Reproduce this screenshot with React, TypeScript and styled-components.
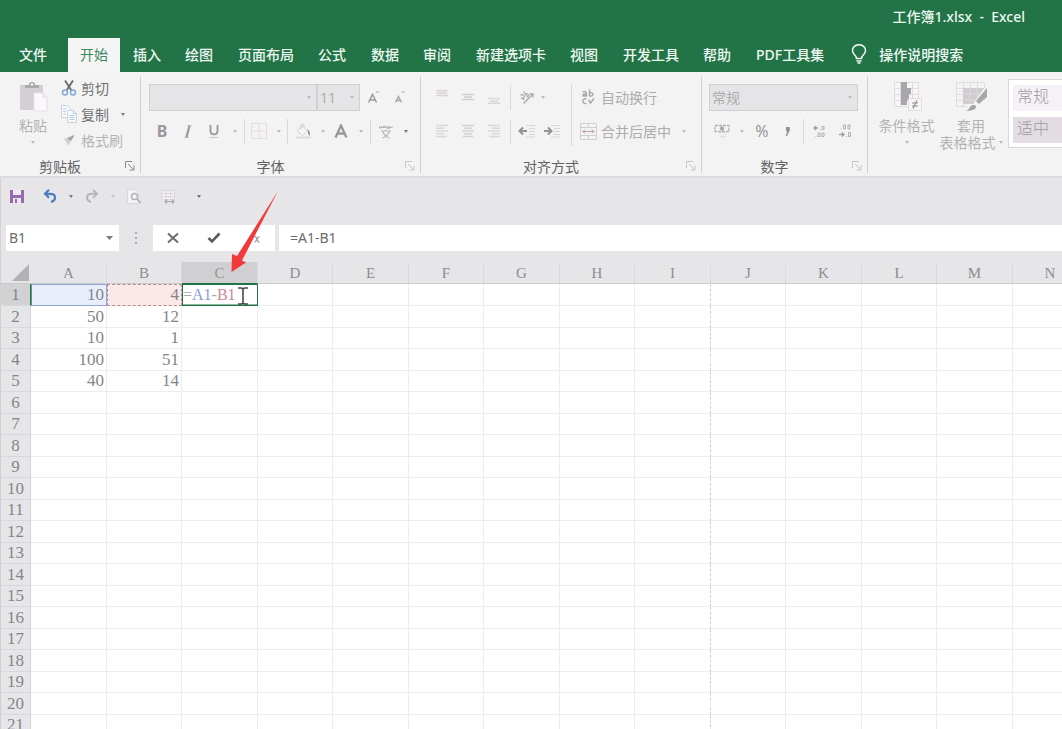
import React from 'react';
import styled, { createGlobalStyle, css } from 'styled-components';

const ui = `"Noto Sans", "Noto Sans CJK SC", sans-serif`;
const cellFont = `"Liberation Serif", "Noto Sans CJK SC", serif`;

const GlobalStyle = createGlobalStyle`
  * { box-sizing: border-box; }
  body { margin: 0; background: #e6e6e8; font-family: ${ui}; font-size: 14px; overflow: hidden; }
  button, select, input { font: inherit; color: inherit; border: 0; background: none; padding: 0; margin: 0; outline: 0; }
  svg { display: block; flex: none; }
`;

const Window = styled.div`
  display: flex;
  flex-direction: column;
  height: 100vh;
  overflow: hidden;
`;

const Header = styled.header`
  background: #227447;
  color: #eef7f1;
  font-weight: 500;
`;

const TitleBar = styled.div`
  display: flex;
  justify-content: flex-end;
  align-items: center;
  height: 38px;
  padding: 0 37px 6px 0;
  white-space: pre;
`;

const Tabs = styled.nav`
  display: flex;
  align-items: stretch;
  height: 34px;
  padding-left: 7px;
`;

const Tab = styled.button<{ $active?: boolean; $file?: boolean }>`
  padding: 0 12px 2px;
  white-space: nowrap;
  margin-right: ${(p) => (p.$file ? 9 : 0)}px;
  &:nth-child(even) { margin-right: 1px; }
  ${(p) =>
    p.$active &&
    css`
      background: #f5f5f5;
      color: #3c8a60;
      font-weight: 400;
    `}
`;

const TellMe = styled.button`
  display: flex;
  align-items: center;
  gap: 12px;
  padding: 0 0 2px 15px;
  white-space: nowrap;
`;

const Ribbon = styled.section`
  display: flex;
  height: 106px;
  flex: none;
  background: #f3f3f3;
  border-bottom: 2px solid #dcdcde;
  color: #acacae;
  overflow: hidden;
`;

const GroupBox = styled.div<{ $w: number }>`
  display: flex;
  flex-direction: column;
  flex: none;
  width: ${(p) => p.$w}px;
  margin-top: 4px;
  margin-bottom: 3px;
  border-right: 1px solid #d2d2d4;
`;

const GroupBody = styled.div`
  display: flex;
  flex: 1;
`;

const GroupFoot = styled.div<{ $on?: boolean }>`
  display: flex;
  align-items: center;
  height: 18px;
  padding-top: 4px;
  color: #626264;
  text-align: center;
  span { flex: 1; }
  button {
    display: flex;
    justify-content: center;
    width: 20px;
    color: ${(p) => (p.$on ? '#8c8c8e' : '#c6c6c8')};
  }
`;

const Column = styled.div<{ $pad?: number; $w?: number }>`
  display: flex;
  flex-direction: column;
  padding: 4px 0 0 ${(p) => p.$pad ?? 0}px;
  width: ${(p) => (p.$w ? p.$w + 'px' : 'auto')};
`;

const Row = styled.div`
  display: flex;
  align-items: center;
  height: 34px;
`;

const Tool = styled.button<{ $w?: number; $size?: number; $bold?: boolean }>`
  display: flex;
  align-items: center;
  justify-content: center;
  flex: none;
  width: ${(p) => p.$w ?? 26}px;
  height: 26px;
  font-size: ${(p) => p.$size ?? 16}px;
  font-weight: ${(p) => (p.$bold ? 700 : 400)};
  color: #98989a;
`;

const Sep = styled.i<{ $w: number; $tall?: boolean }>`
  flex: none;
  width: ${(p) => p.$w}px;
  height: ${(p) => (p.$tall ? 62 : 25)}px;
  margin-top: ${(p) => (p.$tall ? 8 : 0)}px;
  background: linear-gradient(#d9d9db, #d9d9db) center / 1px 100% no-repeat;
`;

const TextTool = styled.button`
  display: flex;
  align-items: center;
  gap: 4px;
  height: 26px;
  white-space: nowrap;
`;

const IconSlot = styled.span`
  display: flex;
  justify-content: center;
  width: 18px;
`;

const Combo = styled.div<{ $w: number }>`
  display: flex;
  align-items: center;
  width: ${(p) => p.$w}px;
  height: 27px;
  padding: 0 5px 0 2px;
  background: #e5e5e7;
  border: 1px solid #d0d0d2;
  select {
    flex: 1;
    min-width: 0;
    appearance: none;
  }
`;

const ClipList = styled.div`
  display: flex;
  flex-direction: column;
  padding-left: 1px;
`;

const ClipItem = styled.button<{ $on?: boolean }>`
  display: flex;
  align-items: center;
  gap: 4px;
  height: 26px;
  padding-bottom: 2px;
  white-space: nowrap;
  color: ${(p) => (p.$on ? '#727274' : '#b4b4b6')};
  svg:last-child:not(:first-child) { margin-left: 8px; }
`;

const BigTool = styled.button<{ $w: number; $pad?: number }>`
  display: flex;
  flex-direction: column;
  align-items: center;
  width: ${(p) => p.$w}px;
  padding: 5px 0 0 ${(p) => p.$pad ?? 0}px;
  line-height: 17px;
  white-space: nowrap;
  color: #b2b2b4;
  svg { margin-bottom: 4px; }
  span { display: flex; align-items: center; min-height: 17px; gap: 3px; }
  span svg { margin: 0; }
`;

const Styles = styled.div`
  display: flex;
  flex: 1;
  min-width: 0;
  padding: 4px 0 0 6px;
`;

const Gallery = styled.div`
  display: flex;
  flex-direction: column;
  gap: 6px;
  flex: 1;
  min-width: 54px;
  height: 69px;
  margin: 3px 0 0 5px;
  padding: 5px 0 0 4px;
  background: #fff;
  border: 1px solid #d8d8da;
  border-right: 0;
`;

const StyleItem = styled.button<{ $bg: string }>`
  height: 26px;
  padding: 0 0 4px 4px;
  text-align: left;
  font-size: 16px;
  line-height: 22px;
  font-weight: 300;
  color: #9c9a9c;
  background: ${(p) => p.$bg};
`;

const QuickBar = styled.div`
  display: flex;
  align-items: center;
  height: 36px;
  flex: none;
  padding-left: 4px;
  border-left: 1px solid #d4d4d6;
`;

const FormulaBar = styled.div`
  display: flex;
  align-items: stretch;
  height: 48px;
  flex: none;
  padding: 11px 0 11px 5px;
  border-left: 1px solid #d4d4d6;
  color: #6c6c6e;
`;

const NameBox = styled.label`
  display: flex;
  align-items: center;
  width: 113px;
  padding: 0 6px 0 3px;
  background: #fff;
  input { flex: 1; min-width: 0; padding-bottom: 2px; }
`;

const Grip = styled.span`
  display: flex;
  align-items: center;
  justify-content: center;
  width: 34px;
`;

const FormulaButtons = styled.div`
  display: flex;
  align-items: center;
  width: 122px;
  background: #fff;
`;

const FormulaInput = styled.input`
  && {
    flex: 1;
    min-width: 0;
    margin-left: 4px;
    padding: 0 0 2px 11px;
    background: #fff;
  }
`;

const Sheet = styled.main`
  position: relative;
  flex: 1;
  min-height: 0;
  overflow: hidden;
`;

const Grid = styled.table`
  table-layout: fixed;
  border-collapse: separate;
  border-spacing: 0;
  width: 1088px;
  font-family: ${cellFont};
  color: #858587;
  font-size: 17px;
  line-height: 20px;
  th, td { padding: 0; overflow: hidden; white-space: nowrap; }
`;

const GutterCol = styled.col`
  width: 31px;
`;

const SheetCol = styled.col`
  width: 75px;
  &:nth-child(even) { width: 76px; }
`;

const HeadCell = styled.th<{ $sel?: boolean }>`
  height: 22px;
  font-size: 15px;
  font-weight: 400;
  color: ${(p) => (p.$sel ? '#8e9a92' : '#8c8c8e')};
  background: ${(p) => (p.$sel ? '#d0d0d2' : '#e6e6e8')};
  border-right: 1px solid #dadadc;
  border-bottom: 1px solid ${(p) => (p.$sel ? '#217346' : '#cacacc')};
`;

const Corner = styled.td`
  background: #e6e6e8;
  border-left: 1px solid #d4d4d6;
  border-bottom: 1px solid #cacacc;
  svg { margin-left: 11px; }
`;

const BodyRow = styled.tr`
  height: 21px;
  &:nth-child(even) { height: 22px; }
`;

const RowHead = styled.th<{ $sel?: boolean }>`
  font-weight: 400;
  text-align: center;
  color: #858587;
  background: ${(p) => (p.$sel ? '#d2d2d4' : '#e6e6e8')};
  border-left: 1px solid #cfcfd1;
  border-right: 1px solid ${(p) => (p.$sel ? '#217346' : '#d4d4d6')};
  border-bottom: 1px solid #d8d8da;
`;

const Cell = styled.td<{ $kind?: string; $break?: boolean }>`
  text-align: right;
  background: #fff;
  border-right: 1px ${(p) => (p.$break ? 'dashed #cfcfd1' : 'solid #ededef')};
  border-bottom: 1px solid #ededef;
  &&& { padding-right: 2px; }
  ${(p) =>
    p.$kind === 'refA' &&
    css`
      background: #e8eefb;
      border: 1px solid #8fa6d8;
      border-left-color: #5d9a86;
    `}
  ${(p) =>
    p.$kind === 'refB' &&
    css`
      background: #fbe9e8;
      border: 1px dashed #b58a8a;
    `}
  ${(p) =>
    p.$kind === 'edit' &&
    css`
      text-align: left;
      font-size: 16px;
      border: 1px solid #217346;
      box-shadow: inset 0 -1px #8dbba2;
    `}
`;

const Ref = styled.span<{ $c: string }>`
  color: ${(p) => p.$c};
`;

const Beam = styled.svg`
  position: absolute;
  left: 237px;
  top: 25px;
`;

const Pointer = styled.svg`
  position: absolute;
  left: 230px;
  top: 190px;
  z-index: 2;
`;

const Caret = ({ c = '#bcbcbe', s = 4 }: { c?: string; s?: number }) => (
  <svg width={s} height={s > 4 ? 4 : 3} viewBox="0 0 6 4" preserveAspectRatio="none" aria-hidden="true">
    <path d="M0 0h6L3 4z" fill={c} />
  </svg>
);

const DropTool = ({ w, c, label }: { w: number; c?: string; label: string }) => (
  <Tool $w={w} aria-label={label}>
    <Caret c={c} />
  </Tool>
);

const Launcher = () => (
  <svg width="10" height="10" viewBox="0 0 10 10" fill="none" stroke="currentColor">
    <path d="M.5 7V.5H7M3 3l5.500 5.500M9 4.500V9H4.500" />
  </svg>
);

const Lines = ({ d, c = '#d0d0d2' }: { d: string; c?: string }) => (
  <svg width="14" height="14" viewBox="0 0 14 14" fill="none" stroke={c} strokeWidth="1.400">
    <path d={d} />
  </svg>
);

const Indent = ({ right }: { right?: boolean }) => (
  <svg width="17" height="14" viewBox="0 0 17 14" fill="none">
    <path d="M8 1.500h9M11 4.500h6M11 7.500h6M11 10.500h6M8 13h9" stroke="#d6d6d8" />
    <path d={right ? 'M1 7h7M5 3.500L8.500 7 5 10.500' : 'M9 7H2M5 3.500L1.500 7 5 10.500'} stroke="#929294" strokeWidth="2" />
  </svg>
);

interface GroupProps {
  label: string;
  w: number;
  on?: boolean;
  children: React.ReactNode;
}

const Group = ({ label, w, on, children }: GroupProps) => (
  <GroupBox $w={w}>
    <GroupBody>{children}</GroupBody>
    <GroupFoot $on={on}>
      <span>{label}</span>
      <button aria-label={label + '设置'}>
        <Launcher />
      </button>
    </GroupFoot>
  </GroupBox>
);

const tabs = ['插入', '绘图', '页面布局', '公式', '数据', '审阅', '新建选项卡', '视图', '开发工具', '帮助', 'PDF工具集'];
const columns = 'ABCDEFGHIJKLMN'.split('');
const rows = Array.from({ length: 21 }, (_, i) => i + 1);
const data: Record<string, string> = {
  A1: '10', B1: '4', A2: '50', B2: '12', A3: '10', B3: '1', A4: '100', B4: '51', A5: '40', B5: '14',
};
const kinds: Record<string, string> = { A1: 'refA', B1: 'refB', C1: 'edit' };

const Clipboard = () => (
  <Group label="剪贴板" w={141} on>
    <BigTool $w={60} $pad={6}>
      <svg width="30" height="32" viewBox="0 0 30 32">
        <path d="M2 4h23v25H2z" fill="#d3cfd4" />
        <path d="M7 7V4h4a3 3 0 0 1 6 0h4v3z" fill="#a9a8ab" />
        <circle cx="14" cy="3.500" r="1.300" fill="#f3f3f3" />
        <path d="M16 12h9l4 4v14H16z" fill="#fbf8fb" stroke="#e6dde5" />
        <path d="M25 12v4h4" fill="none" stroke="#e0d6df" />
      </svg>
      <span>粘贴</span>
      <span>
        <Caret />
      </span>
    </BigTool>
    <ClipList>
      <ClipItem $on>
        <svg width="16" height="16" viewBox="0 0 16 16" fill="none">
          <path d="M4 0.500l6.500 10M12 0.500l-6.500 10" stroke="#6c6c6e" strokeWidth="1.900" />
          <circle cx="4" cy="12.500" r="2.500" stroke="#86a8d6" strokeWidth="1.500" />
          <circle cx="12" cy="12.500" r="2.500" stroke="#86a8d6" strokeWidth="1.500" />
        </svg>
        剪切
      </ClipItem>
      <ClipItem $on>
        <svg width="16" height="18" viewBox="0 0 16 18" fill="#f8fafc" stroke="#ccd3df">
          <path d="M.5 .5h6l3 3v9h-9z" />
          <path d="M2 4h4M2 6.500h3M2 9h3" stroke="#b9d0ec" />
          <path d="M6.500 5.500h6l3 3v9h-9z" />
          <path d="M12.500 5.500v3h3M8.500 10.500h5M8.500 12.500h5M8.500 14.500h5" stroke="#b0caea" />
        </svg>
        复制
        <Caret c="#7a7a7c" />
      </ClipItem>
      <ClipItem>
        <svg width="16" height="16" viewBox="0 0 16 16">
          <path d="M3 7l4-1 3 3-3 5-1-3z" fill="#cfcfd1" />
          <path d="M6 6l5-2 2.500-1.500L12.500 5 10 9z" fill="#a4a4a6" />
        </svg>
        格式刷
      </ClipItem>
    </ClipList>
  </Group>
);

const FontGroup = () => (
  <Group label="字体" w={280}>
    <Column $pad={8}>
      <Row>
        <Combo $w={168}>
          <select aria-label="字体">
            <option></option>
          </select>
          <Caret />
        </Combo>
        <Combo $w={43}>
          <select aria-label="字号" defaultValue="11">
            <option>11</option>
          </select>
          <Caret />
        </Combo>
        <Tool $w={28} aria-label="增大字号">
          <svg width="14" height="16" viewBox="0 0 14 16" fill="none" stroke="#9b9b9d">
            <path d="M1.500 13.500L5.500 5.500 9.500 13.500M3 11h5" strokeWidth="1.500" />
            <path d="M9 4l1.500-2 1.500 2" stroke="#b4b4b6" />
          </svg>
        </Tool>
        <Tool $w={24} aria-label="减小字号">
          <svg width="14" height="16" viewBox="0 0 14 16" fill="none" stroke="#a4a4a6">
            <path d="M2.500 13.500L5.500 7.500 8.500 13.500M3.500 11.500h4" strokeWidth="1.400" />
            <path d="M8.500 2l1.500 2 1.500-2" stroke="#b4b4b6" />
          </svg>
        </Tool>
      </Row>
      <Row>
        <Tool $bold>B</Tool>
        <Tool aria-label="倾斜">
          <svg width="10" height="13" viewBox="0 0 10 13" fill="none" stroke="#98989a">
            <path d="M6.500 1L3.500 12" strokeWidth="2.200" />
            <path d="M4.500 .7h4M1.500 12.300h4" strokeWidth=".8" />
          </svg>
        </Tool>
        <Tool aria-label="下划线">
          <svg width="12" height="15" viewBox="0 0 12 15" fill="none" stroke="#98989a">
            <path d="M2.500 1v6c0 4.500 7 4.500 7 0V1" strokeWidth="1.800" />
            <path d="M1.500 13.500h9" stroke="#cacacc" />
          </svg>
        </Tool>
        <DropTool w={16} label="下划线样式" />
        <Sep $w={3} />
        <Tool aria-label="边框">
          <svg width="16" height="16" viewBox="0 0 16 16" fill="none" stroke="#e6dbe4">
            <path d="M.5 .5h15v15H.5zM8 1v14M1 8h14" />
          </svg>
        </Tool>
        <DropTool w={14} label="边框样式" />
        <Sep $w={3} />
        <Tool $w={28} aria-label="填充颜色">
          <svg width="17" height="17" viewBox="0 0 17 17" fill="none">
            <path d="M2 7.500L7.500 3l5 5-5 4.500z" stroke="#d8cfd7" fill="#f8f4f8" />
            <path d="M6 6V2.500a1.500 1.500 0 0 1 3 0V5" stroke="#ccc5cb" />
            <path d="M12 6.500c2 .5 3.500 2 3 6-1.500 0-2.500-2-2-3.500z" fill="#98989a" />
            <path d="M1 14.500h15" stroke="#e0d8df" strokeWidth="2" />
          </svg>
        </Tool>
        <DropTool w={12} label="填充选项" />
        <Tool $w={24} aria-label="字体颜色">
          <svg width="14" height="14" viewBox="0 0 14 14" fill="none" stroke="#98989a" strokeWidth="2.300">
            <path d="M1.500 13.500L7 1.500 12.500 13.500M3.500 9.500h7" />
          </svg>
        </Tool>
        <DropTool w={16} label="字体颜色选项" />
        <Sep $w={3} />
        <Tool $w={28} aria-label="拼音">
          <svg width="14" height="15" viewBox="0 0 14 15" fill="none" stroke="#b8b8ba">
            <path d="M.5 2v2h2V2M4.500 4V2h2v2M8.500 2.500h2v2h-2zM13 2v2M1 3.500h12" />
            <path d="M2 7h10M7 5.500V7M3.500 7.500c1.500 3.500 4 5.500 7 6.500M10.500 7.500c-1.500 3.500-4 5.500-7 6.500" strokeWidth="1.200" />
          </svg>
        </Tool>
        <DropTool w={12} c="#7a7a7c" label="拼音选项" />
      </Row>
    </Column>
  </Group>
);

const AlignGroup = () => (
  <Group label="对齐方式" w={281}>
    <Column $pad={8} $w={147}>
      <Row>
        <Tool aria-label="顶端对齐"><Lines d="M1 .5h12M2 3h10M1 5.500h12" c="#dccfd5" /></Tool>
        <Tool aria-label="垂直居中"><Lines d="M1 4.500h12M3 7h8M1 9.500h12" /></Tool>
        <Tool aria-label="底端对齐"><Lines d="M1 8.500h12M3 11h8M1 13.300h12" c="#d8d8da" /></Tool>
        <Sep $w={7} />
        <Tool aria-label="方向">
          <svg width="16" height="15" viewBox="0 0 16 15" fill="none" stroke="#aaaaac">
            <path d="M4.500 13.500L13.500 4.500M10.500 4H14V7.500" strokeWidth="1.400" />
            <path d="M2 7.500L5.500 10M1.500 5.500c1-1.500 3-1 4 .5L4 9.500M4.500 1.500L9 7.500M6.500 4c2-1 4 1 2.500 3" strokeWidth="1.200" />
          </svg>
        </Tool>
        <DropTool w={6} label="方向选项" />
      </Row>
      <Row>
        <Tool aria-label="左对齐"><Lines d="M1 1.500h12M1 4.300h8M1 7h12M1 9.800h8M1 12.500h11" c="#d8d8da" /></Tool>
        <Tool aria-label="居中"><Lines d="M1 1.500h12M3 4.300h8M1 7h12M3 9.800h8M2 12.500h10" c="#d2d2d4" /></Tool>
        <Tool aria-label="右对齐"><Lines d="M1 1.500h12M5 4.300h8M1 7h12M5 9.800h8M2 12.500h11" c="#d8d8da" /></Tool>
        <Sep $w={7} />
        <Tool $w={24} aria-label="减少缩进"><Indent /></Tool>
        <Tool aria-label="增加缩进"><Indent right /></Tool>
      </Row>
    </Column>
    <Sep $w={7} $tall />
    <Column $pad={4}>
      <Row>
        <TextTool>
          <IconSlot>
            <svg width="14" height="16" viewBox="0 0 14 16" fill="none" stroke="#a6a6a8" strokeWidth="1.400">
              <path d="M1.500 3c3-1 4 0 4 1.500V7.500M5.500 4.800c-5 0-4.500 3.500 0 1.700M8.500 .5v7M8.500 4c4-2 5 4 0 3M5.500 10c-5-1.500-5 5.500 0 4.500M7.500 11l2 3 3.500-4.500" />
            </svg>
          </IconSlot>
          自动换行
        </TextTool>
      </Row>
      <Row>
        <TextTool>
          <IconSlot>
            <svg width="17" height="17" viewBox="0 0 17 17" fill="none" stroke="#d2ced2">
              <path d="M.5 .5h16v16H.5zM.5 4.500h16M.5 12.500h16M8.500 .5v4M8.500 12.500v4" />
              <path d="M2.500 8.500h12M5 6.500l-2 2 2 2M12 6.500l2 2-2 2" stroke="#bb9dae" />
            </svg>
          </IconSlot>
          合并后居中
        </TextTool>
        <DropTool w={26} label="合并选项" />
      </Row>
    </Column>
  </Group>
);

const NumberGroup = () => (
  <Group label="数字" w={166}>
    <Column $pad={7}>
      <Row>
        <Combo $w={149}>
          <select aria-label="数字格式" defaultValue="常规">
            <option>常规</option>
          </select>
          <Caret />
        </Combo>
      </Row>
      <Row>
        <Tool aria-label="会计数字格式">
          <svg width="16" height="14" viewBox="0 0 16 14" fill="none" stroke="#b2aeb2">
            <path d="M1 1.500h14v6H1z" strokeDasharray="3 1" strokeWidth="1.300" />
            <circle cx="8" cy="4.500" r="1.800" fill="#a4a4a6" />
            <path d="M5 9.500c2-1.500 5-1.500 7 0M5.500 12c2 1.500 4 1.500 6 0" stroke="#dccfd5" />
          </svg>
        </Tool>
        <DropTool w={14} label="货币" />
        <Tool>%</Tool>
        <Tool aria-label="千位分隔">
          <svg width="6" height="9" viewBox="0 0 6 9">
            <path d="M1 0h3.500L5 3 2 9H.8L2.200 4H1z" fill="#919193" />
          </svg>
        </Tool>
        <Sep $w={5} />
        <Tool aria-label="增加小数位">
          <svg width="12" height="13" viewBox="0 0 12 13" fill="none" stroke="#b0b0b2">
            <path d="M1 3h4M3 1L1 3l2 2" strokeWidth="1.400" stroke="#a0a0a2" />
            <path d="M7 5h1M9 1.500h2v3H9zM2.500 11.500h1M5 8h2v3.500H5zM9 8h2v3.500H9z" />
          </svg>
        </Tool>
        <Tool aria-label="减少小数位">
          <svg width="14" height="14" viewBox="0 0 14 14" fill="none" stroke="#b0b0b2">
            <path d="M2.500 5h1M5.500 1h2v4h-2zM10 1h2v4h-2z" />
            <path d="M1 10.500h5M4 8.500l2 2-2 2" strokeWidth="1.400" stroke="#a0a0a2" />
            <path d="M8 12.500h1M10.500 8.500h2v4h-2z" />
          </svg>
        </Tool>
      </Row>
    </Column>
  </Group>
);

const StylesGroup = () => (
  <Styles>
    <BigTool $w={65}>
      <svg width="30" height="32" viewBox="0 0 30 32" fill="none">
        <path d="M2.500 1.500h24v24h-24zM2.500 7.500h24M2.500 13.500h24M2.500 19.500h24M8.500 1.500v24M20.500 1.500v24" stroke="#e2dbe1" fill="#f8f5f8" />
        <path d="M9 1h6v6h4v6h-2v6h-2v5H9z" fill="#a8a7aa" />
        <path d="M16.500 17.500h13v12h-13z" fill="#f8f5f8" stroke="#e2dbe1" />
        <path d="M20 22h6M20 25h6M25 19.500l-4 8" stroke="#8f8f91" strokeWidth="1.200" />
      </svg>
      <span>条件格式</span>
      <span>
        <Caret />
      </span>
    </BigTool>
    <BigTool $w={64}>
      <svg width="32" height="32" viewBox="0 0 32 32" fill="none">
        <path d="M1.500 1.500h28v6h-28zM1.500 13.500h10M1.500 19.500h10M1.500 25.500h10M1.500 7v18.500M8.500 1.500v24M15.500 1.500v6M22.500 1.500v6" stroke="#e2dbe1" />
        <path d="M8 7h21L18 23H8z" fill="#cfccd0" />
        <path d="M8 13h17M8 19h12M15 7v16M22 7v10" stroke="#dcd8dc" />
        <path d="M32 7v9l-8 7-3-3z" fill="#a8a7aa" />
        <path d="M10 30c5 0 4-7 9-6 4 1 3 6-9 6z" fill="#a3a2a5" />
      </svg>
      <span>套用</span>
      <span>
        表格格式
        <Caret />
      </span>
    </BigTool>
    <Gallery>
      <StyleItem $bg="#f6f1f6">常规</StyleItem>
      <StyleItem $bg="#e3dce2">适中</StyleItem>
    </Gallery>
  </Styles>
);

const QuickAccess = () => (
  <QuickBar>
    <Tool $w={24} aria-label="保存">
      <svg width="14" height="13" viewBox="0 0 14 13">
        <path d="M0 0h14v13H0z" fill="#9669b1" />
        <path d="M3 0h8v5H3z" fill="#f1eaf4" />
        <path d="M3 8h8v5H3z" fill="#ebe6ee" />
        <path d="M5 9h2v4H5z" fill="#9669b1" />
      </svg>
    </Tool>
    <Tool $w={42} aria-label="撤消">
      <svg width="14" height="14" viewBox="0 0 14 14" fill="none" stroke="#4c7dbd" strokeWidth="2.200">
        <path d="M6 .8L2 4.800 6 8.800M2 4.800h5c6.500 0 6.500 6.500 1 8.200" />
      </svg>
    </Tool>
    <DropTool w={0} c="#7a7a7c" label="撤消历史" />
    <Tool $w={42} aria-label="重做">
      <svg width="14" height="14" viewBox="0 0 14 14" fill="none" stroke="#b6b6b8" strokeWidth="1.900">
        <path d="M8 .8l4 4-4 4M12 4.800H7c-6.500 0-6.500 6.500-1 8.200" />
      </svg>
    </Tool>
    <DropTool w={0} c="#c4c4c6" label="重做历史" />
    <Tool $w={42} aria-label="打印预览">
      <svg width="14" height="15" viewBox="0 0 14 15" fill="none">
        <path d="M.5 .5h7l4 4v10H.5z" fill="#f5f3f6" stroke="#dad8dc" />
        <circle cx="7.500" cy="7.500" r="3" stroke="#b0b0b2" strokeWidth="1.400" />
        <path d="M10 10l3.500 4" stroke="#b0b0b2" strokeWidth="1.800" />
      </svg>
    </Tool>
    <Tool aria-label="列宽">
      <svg width="16" height="15" viewBox="0 0 16 15" fill="none">
        <path d="M1.500 1.500h13v9h-13zM1.500 4.500h13M1.500 7.500h13M6 1.500v9M10.500 1.500v9" fill="#f4f0f4" stroke="#dcd7dc" />
        <path d="M5 12.500h9M7 10.500l-2 2 2 2M12 10.500l2 2-2 2" stroke="#a8a8aa" strokeWidth="1.200" />
      </svg>
    </Tool>
    <DropTool w={36} c="#707072" label="自定义快速访问工具栏" />
  </QuickBar>
);

export default function App() {
  return (
    <Window>
      <GlobalStyle />
      <Header>
        <TitleBar>{'工作簿1.xlsx  -  Excel'}</TitleBar>
        <Tabs>
          <Tab $file>文件</Tab>
          <Tab $active>开始</Tab>
          {tabs.map((t) => (
            <Tab key={t}>{t}</Tab>
          ))}
          <TellMe>
            <svg width="16" height="20" viewBox="0 0 16 20" fill="none" stroke="#eef7f1" strokeWidth="1.500">
              <path d="M5.500 14.500c0-3-4-4-4-8a6.500 5.800 0 0 1 13 0c0 4-4 5-4 8zM5.500 17h5M6.500 19h3" />
            </svg>
            操作说明搜索
          </TellMe>
        </Tabs>
      </Header>
      <Ribbon>
        <Clipboard />
        <FontGroup />
        <AlignGroup />
        <NumberGroup />
        <StylesGroup />
      </Ribbon>
      <QuickAccess />
      <FormulaBar>
        <NameBox>
          <input aria-label="名称框" defaultValue="B1" />
          <Caret c="#7c7c7e" s={7} />
        </NameBox>
        <Grip>
          <svg width="3" height="13" viewBox="0 0 3 13" fill="#acacae">
            <path d="M0 0h2v2H0zM0 5h2v2H0zM0 10h2v2H0z" />
          </svg>
        </Grip>
        <FormulaButtons>
          <Tool $w={40} aria-label="取消">
            <svg width="12" height="12" viewBox="0 0 12 12" stroke="#6c6c6e" strokeWidth="1.900">
              <path d="M1 1.500l10 9M11 1.500l-10 9" />
            </svg>
          </Tool>
          <Tool $w={42} aria-label="输入">
            <svg width="14" height="12" viewBox="0 0 14 12" fill="none" stroke="#5c5c5e" strokeWidth="2.600">
              <path d="M1.500 6l3.500 3.500 7.500-8" />
            </svg>
          </Tool>
          <Tool $w={40} aria-label="插入函数">
            <svg width="16" height="14" viewBox="0 0 16 14" fill="none" stroke="#a2a2a4">
              <path d="M7 1.500c-2-1-2.500 1-3 4S3 12.500 1 12M2 5.500h4" />
              <path d="M7.500 5.500c2.500-1 2.500 6.500 5 5.500M12.500 5.500c-2 0-3 5.500-5 5.500" strokeWidth="1.400" />
            </svg>
          </Tool>
        </FormulaButtons>
        <FormulaInput aria-label="编辑栏" defaultValue="=A1-B1" />
      </FormulaBar>
      <Sheet>
        <Grid>
          <colgroup>
            <GutterCol />
            {columns.map((c) => (
              <SheetCol key={c} />
            ))}
          </colgroup>
          <thead>
            <tr>
              <Corner>
                <svg width="17" height="17" viewBox="0 0 17 17">
                  <path d="M17 0v17H0z" fill="#b2b2b4" />
                </svg>
              </Corner>
              {columns.map((c) => (
                <HeadCell key={c} $sel={c === 'C'} scope="col">
                  {c}
                </HeadCell>
              ))}
            </tr>
          </thead>
          <tbody>
            {rows.map((r) => (
              <BodyRow key={r}>
                <RowHead $sel={r === 1} scope="row">
                  {r}
                </RowHead>
                {columns.map((c) => {
                  const id = c + r;
                  return (
                    <Cell key={id} $kind={kinds[id]} $break={c === 'I'}>
                      {id === 'C1' ? (
                        <>
                          <Ref $c="#a9a9ab">=</Ref>
                          <Ref $c="#8c9dd6">A1</Ref>
                          <Ref $c="#a9a9ab">-</Ref>
                          <Ref $c="#cf8792">B1</Ref>
                        </>
                      ) : (
                        data[id]
                      )}
                    </Cell>
                  );
                })}
              </BodyRow>
            ))}
          </tbody>
        </Grid>
        <Beam width="12" height="18" viewBox="0 0 12 18" fill="none" stroke="#4a4a4c" strokeWidth="1.600">
          <path d="M1 1h3.500L6 2l1.500-1H11M6 2v14M1 17h3.500L6 16l1.500 1H11" />
        </Beam>
      </Sheet>
      <Pointer width="50" height="84" viewBox="0 0 50 84">
        <path d="M48 1L7 66l-5-2 -.5 18L16 72.500l-4-2z" fill="#f23a3c" />
      </Pointer>
    </Window>
  );
}
